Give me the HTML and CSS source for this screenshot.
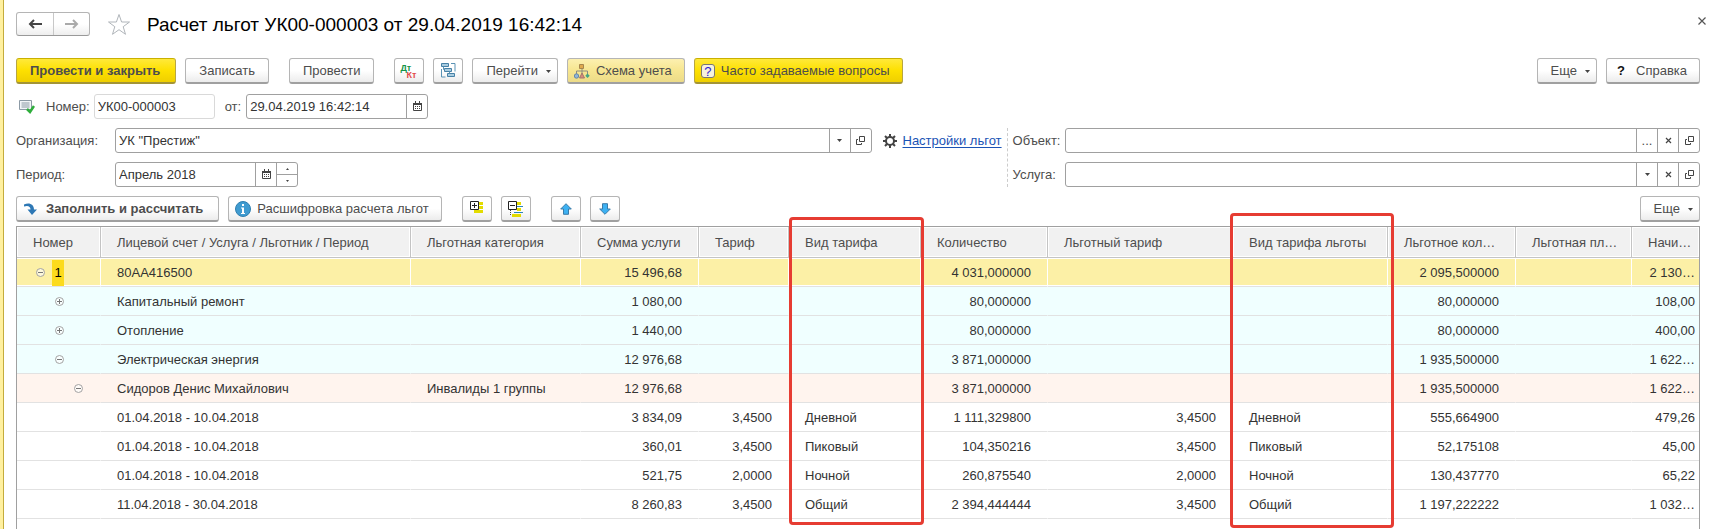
FILE: index.html
```html
<!DOCTYPE html>
<html lang="ru">
<head>
    <meta charset="UTF-8">
    <meta name="viewport" content="width=device-width, initial-scale=1.0">
    <title>Расчет льгот</title>
    <link rel="stylesheet" href="styles.css">
</head>
<body>
    <svg class="sprite" width="0" height="0">
        <symbol id="i-calendar" viewBox="0 0 11 11">
            <path d="M1.500 2.500h8v7h-8z" fill="#fff" stroke="#444"/>
            <path d="M1 2h9v2H1zM3 0h1v2H3zM7 0h1v2H7z" fill="#444"/>
            <path d="M3 5h1v1H3zM5 5h1v1H5zM7 5h1v1H7zM3 7h1v1H3zM5 7h1v1H5zM7 7h1v1H7z" fill="#444"/>
        </symbol>
        <symbol id="i-down" viewBox="0 0 5 3">
            <path d="M0 0h5L2.500 3z" fill="#444"/>
        </symbol>
        <symbol id="i-open" viewBox="0 0 9 9">
            <path d="M3.500.5h5v5h-5zM2 3.500H.5v5h5V7" fill="none" stroke="#444"/>
        </symbol>
        <symbol id="i-clear" viewBox="0 0 7 7">
            <path d="M1 1l5 5M6 1L1 6" fill="none" stroke="#444" stroke-width="1.200"/>
        </symbol>
        <symbol id="i-minus" viewBox="0 0 9 9">
            <circle cx="4.500" cy="4.500" r="4" fill="#fff" fill-opacity=".6" stroke="#a3a3a3"/>
            <path d="M2 4.500h5" stroke="#777"/>
        </symbol>
        <symbol id="i-plus" viewBox="0 0 9 9">
            <circle cx="4.500" cy="4.500" r="4" fill="#fff" fill-opacity=".6" stroke="#a3a3a3"/>
            <path d="M2 4.500h5M4.500 2v5" stroke="#777"/>
        </symbol>
        <symbol id="i-arrow" viewBox="0 0 12 12">
            <path d="M6 .7l5.300 5.300H8.500v5.300h-5V6H.7z" fill="#3db1f2" stroke="#3a7ba8"/>
        </symbol>
    </svg>

    <div class="page">
        <div class="header">
            <div class="history">
                <button type="button" aria-label="Назад">
                    <svg width="14" height="10" viewBox="0 0 14 10"><path d="M2 5h12M6 1L2 5l4 4" fill="none" stroke="#444" stroke-width="2"/></svg>
                </button>
                <button type="button" aria-label="Вперед">
                    <svg width="14" height="10" viewBox="0 0 14 10"><path d="M0 5h12M8 1l4 4-4 4" fill="none" stroke="#aaa" stroke-width="2"/></svg>
                </button>
            </div>
            <button type="button" class="star" aria-label="В избранное">
                <svg width="24" height="23" viewBox="0 0 24 23"><path d="M12 1.500l2.600 7.500h7.900l-6.300 4.700 2.300 7.600-6.500-4.600-6.500 4.600 2.300-7.600L1.500 9h7.900z" fill="#fff" stroke="#b0b5ba"/></svg>
            </button>
            <h1>Расчет льгот УК00-000003 от 29.04.2019 16:42:14</h1>
            <button type="button" class="close" aria-label="Закрыть">
                <svg width="8" height="8" viewBox="0 0 8 8"><path d="M.5.5l7 7M7.500.5l-7 7" stroke="#555" stroke-width="1.200"/></svg>
            </button>
        </div>

        <div class="toolbar">
            <button type="button" class="btn yellow bold">Провести и закрыть</button>
            <button type="button" class="btn">Записать</button>
            <button type="button" class="btn group">Провести</button>
            <button type="button" class="btn icon group dtkt" aria-label="Дт Кт">
                <span class="dt">Дт</span><span class="kt">Кт</span>
            </button>
            <button type="button" class="btn icon" aria-label="Структура подчиненности">
                <svg width="15" height="15" viewBox="0 0 15 15">
                    <path d="M.5.5h7v3h-7zM3.500 5.500h7v3h-7zM6.500 10.500h7v3h-7z" fill="#a9cce0" stroke="#4681a6"/>
                    <path d="M10 .5h4v8M.5 6v8h4M2.500 3.500v3h1M8.500 8.500v2" fill="none" stroke="#5b93b5"/>
                </svg>
            </button>
            <button type="button" class="btn drop">Перейти <svg width="5" height="3"><use href="#i-down"/></svg></button>
            <button type="button" class="btn pale with-icon">
                <svg width="16" height="15" viewBox="0 0 16 15">
                    <path d="M8 4v7M2.500 11V7h11v4" fill="none" stroke="#8c8c80"/>
                    <path d="M5.500.5h4v4h-4z" fill="#e0a94c" stroke="#a8874c"/>
                    <circle cx="2.500" cy="12" r="2.200" fill="#8fb4d8" stroke="#6688a5"/>
                    <path d="M8 9l2.500 5h-5z" fill="#d98b7b" stroke="#a3776c"/>
                    <path d="M13.500 9.500l2.200 2.300-2.200 2.300-2.200-2.300z" fill="#45a682"/>
                </svg>
                Схема учета
            </button>
            <button type="button" class="btn yellow with-icon">
                <span class="faq-icon">?</span>
                Часто задаваемые вопросы
            </button>
            <span class="spacer"></span>
            <button type="button" class="btn drop">Еще <svg width="5" height="3"><use href="#i-down"/></svg></button>
            <button type="button" class="btn help"><b>?</b> Справка</button>
        </div>

        <div class="number-row">
            <svg class="state" width="16" height="14" viewBox="0 0 16 14">
                <path d="M.5.5h12v9H.5z" fill="#f2f5f7" stroke="#8c9aa5"/>
                <path d="M2.500 3h8M2.500 5h8M2.500 7h8" stroke="#8c9aa5"/>
                <path d="M8 9l3 3 4-6" fill="none" stroke="#2fae3c" stroke-width="2.500"/>
            </svg>
            <label for="number">Номер:</label>
            <div class="field readonly number"><input type="text" id="number" value="УК00-000003" readonly></div>
            <label for="date" class="from">от:</label>
            <div class="field date">
                <input type="text" id="date" value="29.04.2019 16:42:14">
                <button type="button" aria-label="Выбрать дату"><svg width="11" height="11"><use href="#i-calendar"/></svg></button>
            </div>
        </div>

        <div class="form">
            <div class="left">
                <label for="org">Организация:</label>
                <div class="org">
                    <div class="field">
                        <input type="text" id="org" value='УК "Престиж"'>
                        <button type="button" aria-label="Выбрать"><svg width="5" height="3"><use href="#i-down"/></svg></button>
                        <button type="button" aria-label="Открыть"><svg width="9" height="9"><use href="#i-open"/></svg></button>
                    </div>
                    <svg width="14" height="14" viewBox="0 0 14 14">
                        <circle cx="7" cy="7" r="4" fill="none" stroke="#444" stroke-width="2"/>
                        <path d="M7 0v3M7 11v3M0 7h3M11 7h3M2 2l2 2M10 10l2 2M12 2l-2 2M4 10l-2 2" stroke="#444" stroke-width="2"/>
                    </svg>
                    <a href="#">Настройки льгот</a>
                </div>
                <label for="period">Период:</label>
                <div class="field period">
                    <input type="text" id="period" value="Апрель 2018">
                    <button type="button" aria-label="Выбрать период"><svg width="11" height="11"><use href="#i-calendar"/></svg></button>
                    <div class="spin">
                        <button type="button" aria-label="Следующий"><svg width="3" height="2" viewBox="0 0 3 2"><path d="M0 2h3L1.500 0z" fill="#444"/></svg></button>
                        <button type="button" aria-label="Предыдущий"><svg width="3" height="2" viewBox="0 0 3 2"><path d="M0 0h3L1.500 2z" fill="#444"/></svg></button>
                    </div>
                </div>
            </div>
            <div class="right">
                <label for="object">Объект:</label>
                <div class="field">
                    <input type="text" id="object">
                    <button type="button" aria-label="Выбрать">...</button>
                    <button type="button" aria-label="Очистить"><svg width="7" height="7"><use href="#i-clear"/></svg></button>
                    <button type="button" aria-label="Открыть"><svg width="9" height="9"><use href="#i-open"/></svg></button>
                </div>
                <label for="service">Услуга:</label>
                <div class="field">
                    <input type="text" id="service">
                    <button type="button" aria-label="Выбрать"><svg width="5" height="3"><use href="#i-down"/></svg></button>
                    <button type="button" aria-label="Очистить"><svg width="7" height="7"><use href="#i-clear"/></svg></button>
                    <button type="button" aria-label="Открыть"><svg width="9" height="9"><use href="#i-open"/></svg></button>
                </div>
            </div>
        </div>

        <div class="toolbar">
            <button type="button" class="btn bold with-icon">
                <svg width="15" height="13" viewBox="0 0 15 13"><path d="M1 1.500C6-1 11 1 11 6.500h3L9 12 4.500 6.500h3C7.500 3.500 5 2 1 3.500z" fill="#2e78b5"/></svg>
                Заполнить и рассчитать
            </button>
            <button type="button" class="btn with-icon">
                <svg width="16" height="16" viewBox="0 0 16 16">
                    <circle cx="8" cy="8" r="7.500" fill="#3f9bd0" stroke="#2f7fb0"/>
                    <path d="M7 3h2v2H7zM6 6.500h3V12h1v1H6v-1h1V7.500H6z" fill="#fff"/>
                </svg>
                Расшифровка расчета льгот
            </button>
            <button type="button" class="btn icon group" aria-label="Развернуть">
                <svg width="16" height="16" viewBox="0 0 16 16">
                    <path d="M9 1h5v3H9zM9 5h5v3H9zM5 9h9v3H5z" fill="#e3dc00"/>
                    <path d="M1.500.5h8v8h-8z" fill="#fff" stroke="#222"/>
                    <path d="M3 4.500h5M5.500 2v5" stroke="#222"/>
                </svg>
            </button>
            <button type="button" class="btn icon" aria-label="Свернуть">
                <svg width="16" height="16" viewBox="0 0 16 16">
                    <path d="M9 1h4v3H9zM9 7h4v3H9zM4 13h9v3H4z" fill="#e3dc00"/>
                    <path d="M9 5.500h6M6 11.500h9" stroke="#2b86b8"/>
                    <path d="M2.500 9v6" stroke="#444" stroke-dasharray="1 1"/>
                    <path d="M.5.5h8v8h-8z" fill="#fff" stroke="#222"/>
                    <path d="M2 4.500h5" stroke="#222"/>
                </svg>
            </button>
            <button type="button" class="btn icon group" aria-label="Вверх"><svg width="12" height="12"><use href="#i-arrow"/></svg></button>
            <button type="button" class="btn icon" aria-label="Вниз"><svg class="flip" width="12" height="12"><use href="#i-arrow"/></svg></button>
            <span class="spacer"></span>
            <button type="button" class="btn drop">Еще <svg width="5" height="3"><use href="#i-down"/></svg></button>
        </div>

        <div class="grid">
            <table>
                <colgroup>
                    <col class="c-number"><col><col class="c-category"><col class="c-sum"><col class="c-tariff"><col class="c-kind">
                    <col class="c-count"><col class="c-btariff"><col class="c-bkind"><col class="c-bcount"><col class="c-barea"><col class="c-charge">
                </colgroup>
                <thead>
                    <tr>
                        <th>Номер</th>
                        <th>Лицевой счет / Услуга / Льготник / Период</th>
                        <th>Льготная категория</th>
                        <th>Сумма услуги</th>
                        <th>Тариф</th>
                        <th class="marked">Вид тарифа<span class="frame"></span></th>
                        <th>Количество</th>
                        <th>Льготный тариф</th>
                        <th class="marked">Вид тарифа льготы<span class="frame tall"></span></th>
                        <th>Льготное кол…</th>
                        <th>Льготная пл…</th>
                        <th>Начи…</th>
                    </tr>
                </thead>
                <tbody>
                    <tr class="selected">
                        <td class="tree"><div><svg width="9" height="9"><use href="#i-minus"/></svg><span class="current">1</span></div></td>
                        <td>80АА416500</td><td></td><td class="num">15 496,68</td><td></td><td></td>
                        <td class="num">4 031,000000</td><td></td><td></td><td class="num">2 095,500000</td><td></td><td class="num">2 130…</td>
                    </tr>
                    <tr class="service">
                        <td class="tree level2"><div><svg width="9" height="9"><use href="#i-plus"/></svg></div></td>
                        <td>Капитальный ремонт</td><td></td><td class="num">1 080,00</td><td></td><td></td>
                        <td class="num">80,000000</td><td></td><td></td><td class="num">80,000000</td><td></td><td class="num">108,00</td>
                    </tr>
                    <tr class="service">
                        <td class="tree level2"><div><svg width="9" height="9"><use href="#i-plus"/></svg></div></td>
                        <td>Отопление</td><td></td><td class="num">1 440,00</td><td></td><td></td>
                        <td class="num">80,000000</td><td></td><td></td><td class="num">80,000000</td><td></td><td class="num">400,00</td>
                    </tr>
                    <tr class="service">
                        <td class="tree level2"><div><svg width="9" height="9"><use href="#i-minus"/></svg></div></td>
                        <td>Электрическая энергия</td><td></td><td class="num">12 976,68</td><td></td><td></td>
                        <td class="num">3 871,000000</td><td></td><td></td><td class="num">1 935,500000</td><td></td><td class="num">1 622…</td>
                    </tr>
                    <tr class="person">
                        <td class="tree level3"><div><svg width="9" height="9"><use href="#i-minus"/></svg></div></td>
                        <td>Сидоров Денис Михайлович</td><td>Инвалиды 1 группы</td><td class="num">12 976,68</td><td></td><td></td>
                        <td class="num">3 871,000000</td><td></td><td></td><td class="num">1 935,500000</td><td></td><td class="num">1 622…</td>
                    </tr>
                    <tr>
                        <td></td><td>01.04.2018 - 10.04.2018</td><td></td><td class="num">3 834,09</td><td class="num">3,4500</td><td>Дневной</td>
                        <td class="num">1 111,329800</td><td class="num">3,4500</td><td>Дневной</td><td class="num">555,664900</td><td></td><td class="num">479,26</td>
                    </tr>
                    <tr>
                        <td></td><td>01.04.2018 - 10.04.2018</td><td></td><td class="num">360,01</td><td class="num">3,4500</td><td>Пиковый</td>
                        <td class="num">104,350216</td><td class="num">3,4500</td><td>Пиковый</td><td class="num">52,175108</td><td></td><td class="num">45,00</td>
                    </tr>
                    <tr>
                        <td></td><td>01.04.2018 - 10.04.2018</td><td></td><td class="num">521,75</td><td class="num">2,0000</td><td>Ночной</td>
                        <td class="num">260,875540</td><td class="num">2,0000</td><td>Ночной</td><td class="num">130,437770</td><td></td><td class="num">65,22</td>
                    </tr>
                    <tr>
                        <td></td><td>11.04.2018 - 30.04.2018</td><td></td><td class="num">8 260,83</td><td class="num">3,4500</td><td>Общий</td>
                        <td class="num">2 394,444444</td><td class="num">3,4500</td><td>Общий</td><td class="num">1 197,222222</td><td></td><td class="num">1 032…</td>
                    </tr>
                </tbody>
            </table>
        </div>
    </div>
</body>
</html>
```
FILE: styles.css
```css
* {
    box-sizing: border-box;
}
body {
    margin: 0;
    background: #fff;
    color: #4d4d4d;
    font: 13px/16px "Liberation Sans", Arial, sans-serif;
}
button, input {
    font: inherit;
    color: inherit;
    margin: 0;
    padding: 0;
}
button {
    border: 0;
    background: none;
    cursor: pointer;
}
svg {
    display: block;
    flex: none;
}
.sprite {
    position: absolute;
}
.page {
    display: flex;
    flex-direction: column;
    min-height: 100vh;
    padding: 12px 12px 0;
    border-left: 4px solid #c4ac3c;
    border-image: linear-gradient(90deg, #fff0a0 3px, #c4ac3c 3px) 0 0 0 4;
}

/* title */
.header {
    display: flex;
    align-items: center;
    height: 24px;
    margin: 0 -6px 22px 0;
}
.history {
    display: flex;
    height: 24px;
    border: 1px solid #b5b5b5;
    border-bottom-color: #999;
    border-radius: 3px;
    background: linear-gradient(#fff 50%, #eee);
}
.history button {
    display: flex;
    align-items: center;
    justify-content: center;
    width: 36px;
}
.history button + button {
    border-left: 1px solid #c8c8c8;
}
.star {
    margin: 0 16px 0 17px;
}
h1 {
    flex: 1;
    margin: 0;
    padding-top: 2px;
    color: #000;
    font-size: 19px;
    line-height: 24px;
    font-weight: normal;
}
.close {
    align-self: flex-start;
    padding: 5px 0;
}

/* buttons */
.toolbar {
    display: flex;
    gap: 9px;
}
.btn {
    display: flex;
    align-items: center;
    justify-content: center;
    height: 26px;
    padding: 1px 13px 0;
    border: 1px solid #b5b5b5;
    border-bottom: 2px solid #a0a0a0;
    border-radius: 3px;
    background: linear-gradient(#fff 50%, #ececec);
    white-space: nowrap;
}
.btn.group {
    margin-left: 11px;
}
.btn.icon {
    width: 30px;
    padding: 0;
}
.btn.yellow {
    border-color: #c9b000 #b8a640 #a39436;
    background: linear-gradient(#ffe93a, #fde000 50%, #efcf00);
}
.btn.pale {
    background: linear-gradient(#fcf0b0, #f7e690 50%, #ecdb88);
}
.btn.drop {
    gap: 8px;
    padding-right: 6px;
}
.btn.with-icon {
    gap: 6px;
    padding-left: 6px;
    padding-right: 12px;
}
.btn.bold {
    padding-right: 15px;
    font-weight: bold;
}
.btn.bold.with-icon {
    gap: 8px;
}
.btn.help {
    gap: 11px;
    padding-left: 10px;
    padding-right: 12px;
}
.btn.help b {
    color: #111;
}
.dtkt {
    position: relative;
}
.dt, .kt {
    position: absolute;
    font-size: 9px;
    line-height: 10px;
    font-weight: bold;
}
.dt {
    left: 5px;
    top: 4px;
    color: #159447;
}
.kt {
    left: 11px;
    top: 11px;
    color: #e34b4b;
}
.faq-icon {
    width: 14px;
    height: 14px;
    border: 1px solid #777;
    border-radius: 3px;
    background: #f7f2dc;
    color: #2a22d0;
    line-height: 13px;
}
.spacer {
    flex: 1;
}
.flip {
    transform: rotate(180deg);
}

/* fields */
.field {
    display: flex;
    height: 25px;
    border: 1px solid #a0a0a0;
    border-radius: 3px;
    background: #fff;
}
.field input {
    flex: 1;
    min-width: 0;
    width: 0;
    padding: 0 3px;
    border: 0;
    outline: 0;
    background: none;
    color: #333;
}
.field > button, .spin {
    display: flex;
    align-items: center;
    justify-content: center;
    width: 21px;
    border-left: 1px solid #a0a0a0;
}
.field.readonly {
    border-color: #d9d9d9;
}
.spin {
    flex-direction: column;
}
.spin button {
    display: flex;
    flex: 1;
    align-items: center;
    justify-content: center;
    width: 100%;
}
.spin button + button {
    border-top: 1px solid #a0a0a0;
}
.number-row {
    display: flex;
    align-items: center;
    margin: 10px 0 9px;
    padding-left: 3px;
}
.state {
    margin-right: 11px;
}
.number {
    width: 121px;
    margin-left: 4px;
}
.from {
    margin: 0 5px 0 10px;
}
.date {
    width: 182px;
}
.form {
    display: grid;
    grid-template-columns: minmax(0, 10fr) minmax(0, 7fr);
    margin-bottom: 9px;
}
.left, .right {
    display: grid;
    align-items: center;
    row-gap: 9px;
}
.left {
    grid-template-columns: 99px minmax(0, 1fr);
    padding-right: 5px;
}
.right {
    grid-template-columns: 52px minmax(0, 1fr);
    padding-left: 5px;
    border-left: 1px dashed #ccc;
}
.org {
    display: flex;
    align-items: center;
    gap: 6px;
}
.org .field {
    flex: 1;
    margin-right: 5px;
}
.org a {
    color: #1a53b5;
    text-underline-offset: 2px;
}
.period {
    width: 183px;
}

/* table */
.grid {
    flex: 1;
    margin-top: 4px;
    border: 1px solid #a0a0a0;
    border-bottom: 0;
}
table {
    width: 100%;
    table-layout: fixed;
    border-spacing: 0;
}
.c-number { width: 84px; }
.c-category { width: 170px; }
.c-sum { width: 118px; }
.c-tariff { width: 90px; }
.c-kind { width: 132px; }
.c-count { width: 127px; }
.c-btariff { width: 185px; }
.c-bkind { width: 155px; }
.c-bcount { width: 128px; }
.c-barea { width: 116px; }
.c-charge { width: 67px; }
th, td {
    padding: 2px 16px 0;
    text-align: left;
    white-space: nowrap;
}
th {
    height: 31px;
    border-right: 1px solid #c4c4c4;
    border-bottom: 1px solid #c4c4c4;
    background: #f1f1f1;
    box-shadow: inset 0 0 0 1px #fff;
    font-weight: normal;
}
td {
    height: 29px;
    border-right: 1px solid transparent;
    border-bottom: 1px solid #e2e2e2;
    color: #333;
}
th:last-child, td:last-child {
    padding-right: 4px;
    border-right: 0;
}
.num {
    text-align: right;
}
.service {
    background: #f0ffff;
}
.person {
    background: #fff4ee;
}
.selected {
    background: #fcf0a6;
}
.selected td {
    border-right-color: #fff;
    box-shadow: inset 0 1px #fff, inset 0 -1px #fff;
}
.tree {
    padding: 1px 0 0 19px;
}
.tree div {
    display: flex;
    align-items: center;
}
.level2 {
    padding-left: 38px;
}
.level3 {
    padding-left: 57px;
}
.current {
    width: 12px;
    margin-left: 7px;
    background: #fcdb1c;
    color: #000;
    line-height: 26px;
    text-align: center;
}

/* red frames over the tariff kind columns */
.marked {
    position: relative;
}
.frame {
    position: absolute;
    z-index: 1;
    top: -10px;
    left: 0;
    right: -4px;
    height: 308px;
    border: 3px solid #e63c32;
    border-radius: 4px;
    pointer-events: none;
}
.frame.tall {
    top: -14px;
    left: -3px;
    right: -7px;
    height: 315px;
}
```
